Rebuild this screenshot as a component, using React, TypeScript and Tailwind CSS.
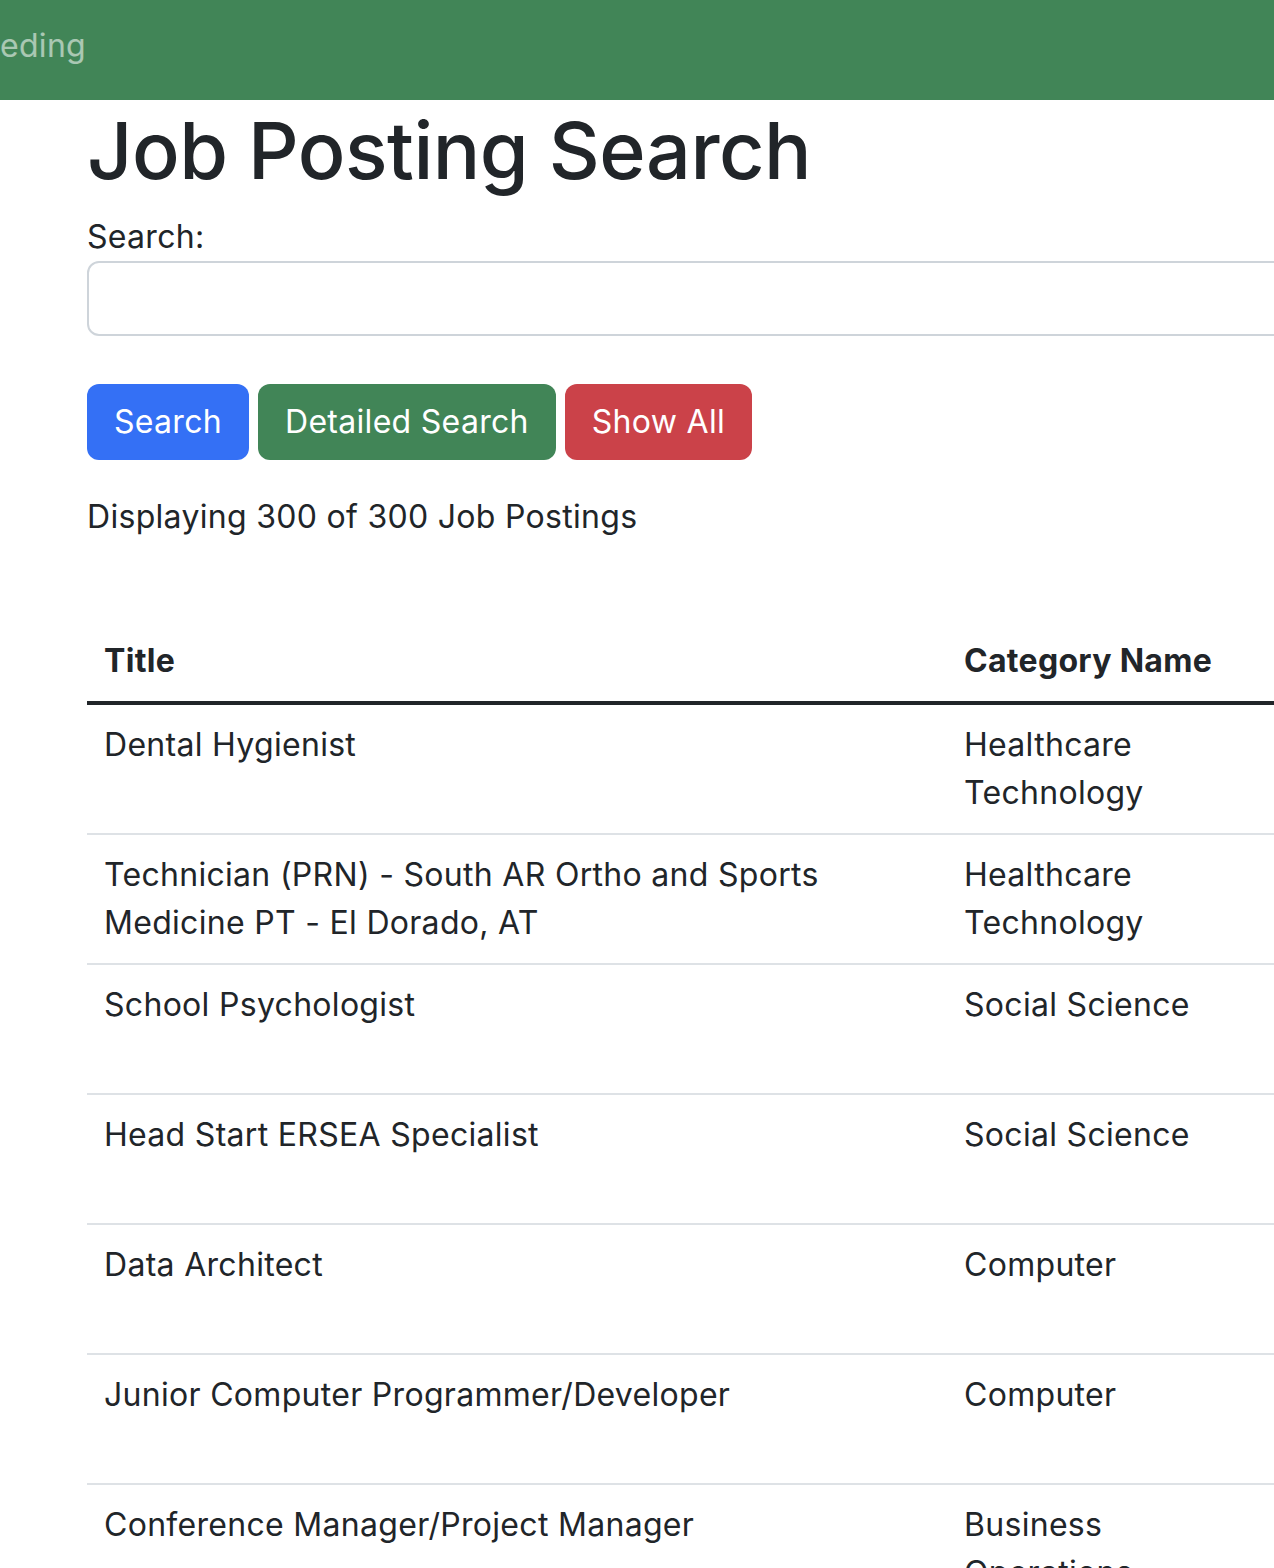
const rows = [
  { title: ["Dental Hygienist"], category: ["Healthcare", "Technology"] },
  {
    title: ["Technician (PRN) - South AR Ortho and Sports", "Medicine PT - El Dorado, AT"],
    category: ["Healthcare", "Technology"],
  },
  { title: ["School Psychologist"], category: ["Social Science"] },
  { title: ["Head Start ERSEA Specialist"], category: ["Social Science"] },
  { title: ["Data Architect"], category: ["Computer"] },
  { title: ["Junior Computer Programmer/Developer"], category: ["Computer"] },
  { title: ["Conference Manager/Project Manager"], category: ["Business", "Operations"] },
];

export default function App() {
  return (
    <div
      className="w-[1274px] h-[1568px] overflow-hidden bg-white text-[#212529]"
      style={{ fontFamily: "Inter, 'Noto Sans', sans-serif" }}
    >
      {/* Navbar */}
      <nav className="h-[100px] w-[1700px] bg-[#418557] flex items-center">
        <span className="text-[32px] text-white/55 leading-none pb-[8px] tracking-[0.3px]">eding</span>
      </nav>

      {/* Content */}
      <main className="w-[1700px] pl-[87px] tracking-[0.3px]">
        <h1 className="text-[79px] font-medium leading-[1.2] tracking-[-0.5px] mt-[3px]">Job Posting Search</h1>

        <label className="block text-[32px] leading-[48px] mt-[15px]">Search:</label>
        <input
          type="text"
          className="block w-full h-[75px] rounded-[12px] border-2 border-[#ced4da] bg-white px-6 text-[32px] outline-none"
        />

        <div className="flex gap-[9px] mt-[48px]">
          <button className="h-[76px] px-[27px] rounded-[12px] bg-[#3470f5] text-white text-[32px]">Search</button>
          <button className="h-[76px] px-[27px] rounded-[12px] bg-[#418557] text-white text-[32px]">Detailed Search</button>
          <button className="h-[76px] px-[27px] rounded-[12px] bg-[#cb4249] text-white text-[32px]">Show All</button>
        </div>

        <p className="text-[32px] leading-[48px] mt-[33px]">Displaying 300 of 300 Job Postings</p>

        <table className="mt-[80px] w-[1400px] border-collapse text-[32px] leading-[48px]">
          <thead>
            <tr className="border-b-4 border-[#212529]">
              <th className="w-[860px] text-left font-bold px-[17px] py-[16px]">Title</th>
              <th className="text-left font-bold px-[17px] py-[16px]">Category Name</th>
            </tr>
          </thead>
          <tbody>
            {rows.map((r, i) => (
              <tr key={i} className="border-b-2 border-[#dee2e6] h-[130px]">
                <td className="align-top px-[17px] py-[16px]">
                  {r.title.map((t) => (
                    <div key={t}>{t}</div>
                  ))}
                </td>
                <td className="align-top px-[17px] py-[16px]">
                  {r.category.map((t) => (
                    <div key={t}>{t}</div>
                  ))}
                </td>
              </tr>
            ))}
          </tbody>
        </table>
      </main>
    </div>
  );
}
